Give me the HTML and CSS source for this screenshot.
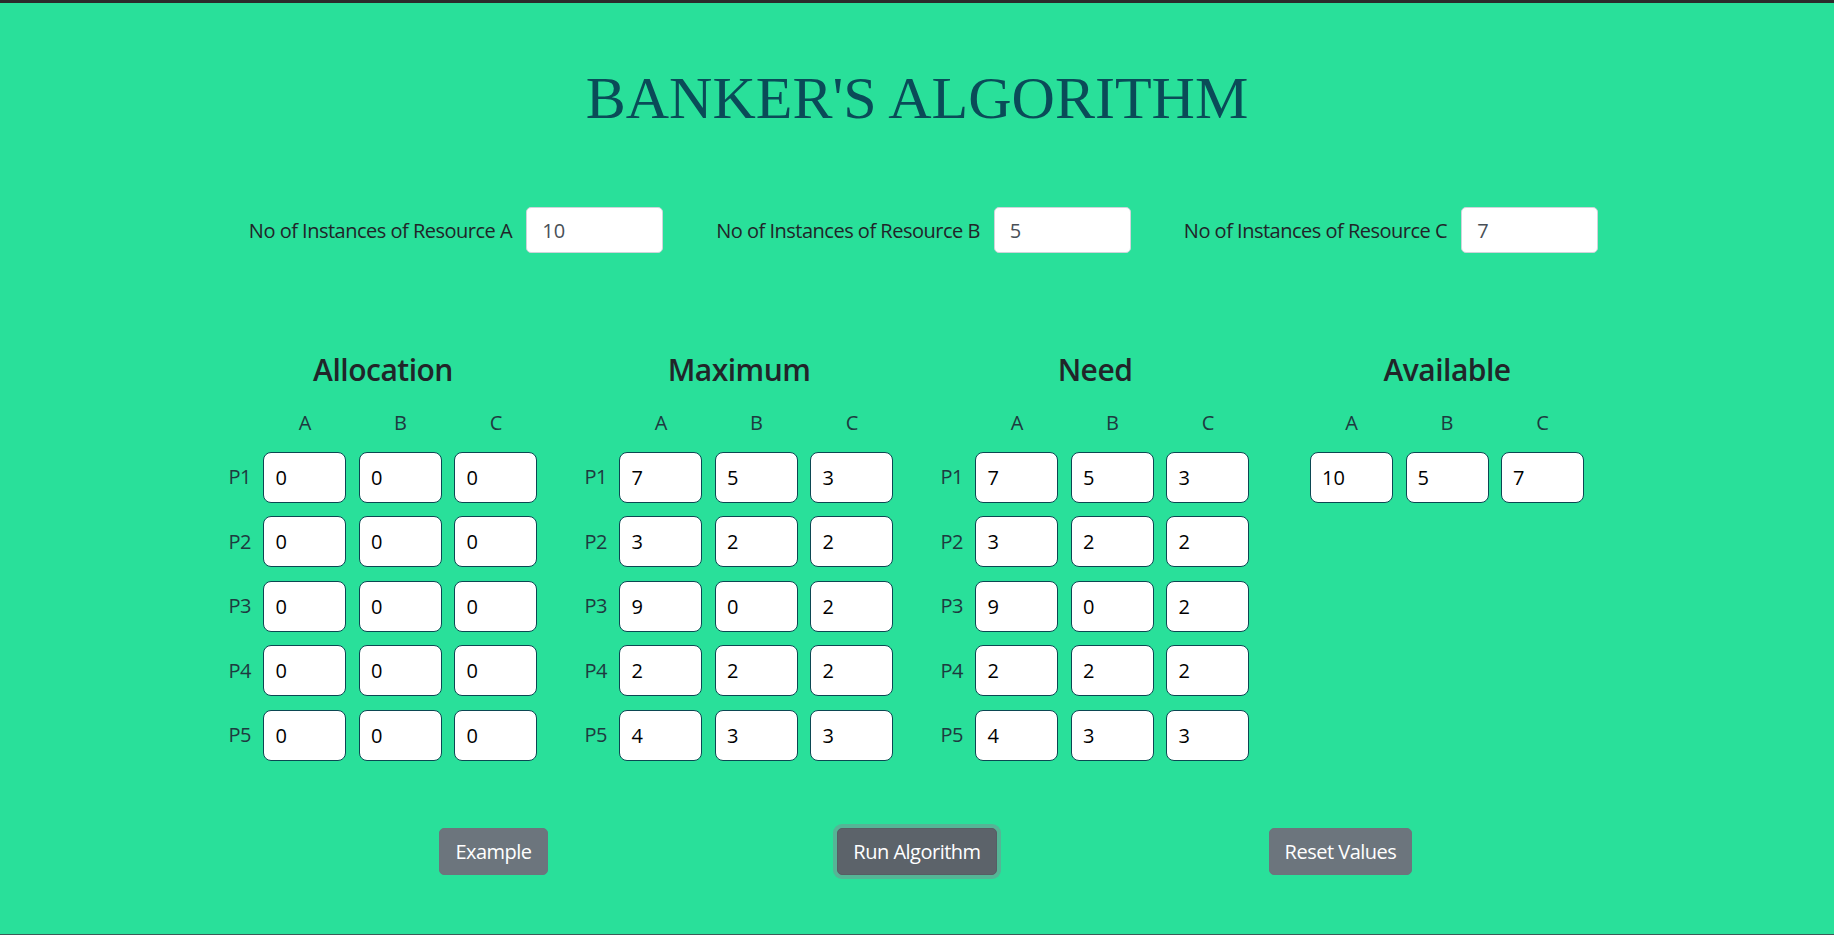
FILE: index.html
```html
<!DOCTYPE html>
<html lang="en">
<head>
<meta charset="utf-8">
<title>Banker's Algorithm</title>
<link rel="stylesheet" href="styles.css">
</head>
<body>
<div class="page">
  <h1 class="title">BANKER'S ALGORITHM</h1>

  <div class="resources">
    <div class="res">
      <label class="res-label" for="resA">No of Instances of Resource A</label>
      <input class="res-input" id="resA" type="text" value="10">
    </div>
    <div class="res">
      <label class="res-label" for="resB">No of Instances of Resource B</label>
      <input class="res-input" id="resB" type="text" value="5">
    </div>
    <div class="res">
      <label class="res-label" for="resC">No of Instances of Resource C</label>
      <input class="res-input" id="resC" type="text" value="7">
    </div>
  </div>

  <div class="matrices">
    <div class="matrix">
      <h2 class="matrix-title">Allocation</h2>
      <div class="grid">
        <span></span><span class="col-head">A</span><span class="col-head">B</span><span class="col-head">C</span>
        <span class="row-head">P1</span><input class="cell" value="0"><input class="cell" value="0"><input class="cell" value="0">
        <span class="row-head">P2</span><input class="cell" value="0"><input class="cell" value="0"><input class="cell" value="0">
        <span class="row-head">P3</span><input class="cell" value="0"><input class="cell" value="0"><input class="cell" value="0">
        <span class="row-head">P4</span><input class="cell" value="0"><input class="cell" value="0"><input class="cell" value="0">
        <span class="row-head">P5</span><input class="cell" value="0"><input class="cell" value="0"><input class="cell" value="0">
      </div>
    </div>

    <div class="matrix">
      <h2 class="matrix-title">Maximum</h2>
      <div class="grid">
        <span></span><span class="col-head">A</span><span class="col-head">B</span><span class="col-head">C</span>
        <span class="row-head">P1</span><input class="cell" value="7"><input class="cell" value="5"><input class="cell" value="3">
        <span class="row-head">P2</span><input class="cell" value="3"><input class="cell" value="2"><input class="cell" value="2">
        <span class="row-head">P3</span><input class="cell" value="9"><input class="cell" value="0"><input class="cell" value="2">
        <span class="row-head">P4</span><input class="cell" value="2"><input class="cell" value="2"><input class="cell" value="2">
        <span class="row-head">P5</span><input class="cell" value="4"><input class="cell" value="3"><input class="cell" value="3">
      </div>
    </div>

    <div class="matrix">
      <h2 class="matrix-title">Need</h2>
      <div class="grid">
        <span></span><span class="col-head">A</span><span class="col-head">B</span><span class="col-head">C</span>
        <span class="row-head">P1</span><input class="cell" value="7"><input class="cell" value="5"><input class="cell" value="3">
        <span class="row-head">P2</span><input class="cell" value="3"><input class="cell" value="2"><input class="cell" value="2">
        <span class="row-head">P3</span><input class="cell" value="9"><input class="cell" value="0"><input class="cell" value="2">
        <span class="row-head">P4</span><input class="cell" value="2"><input class="cell" value="2"><input class="cell" value="2">
        <span class="row-head">P5</span><input class="cell" value="4"><input class="cell" value="3"><input class="cell" value="3">
      </div>
    </div>

    <div class="matrix matrix-avail">
      <h2 class="matrix-title">Available</h2>
      <div class="grid grid-avail">
        <span class="col-head">A</span><span class="col-head">B</span><span class="col-head">C</span>
        <input class="cell" value="10"><input class="cell" value="5"><input class="cell" value="7">
      </div>
    </div>
  </div>

  <div class="actions">
    <div class="action"><button class="btn" type="button">Example</button></div>
    <div class="action"><button class="btn btn-active" type="button">Run Algorithm</button></div>
    <div class="action"><button class="btn" type="button">Reset Values</button></div>
  </div>
</div>
</body>
</html>
```

FILE: styles.css
```css
html, body {
  margin: 0;
  padding: 0;
}

body {
  background: #29e09a;
  font-family: "Open Sans", "Noto Sans", sans-serif;
  font-size: 20px;
  color: #212529;
}

.page {
  box-sizing: border-box;
  min-height: 100vh;
  border-top: 3px solid #2b2b2b;
  border-bottom: 1px solid #3c5b57;
  overflow: hidden;
}

.title {
  margin: 59px 0 0;
  font-family: "Liberation Serif", "Times New Roman", serif;
  font-weight: 400;
  font-size: 60px;
  line-height: 72px;
  text-align: center;
  color: #0a4b58;
}

/* resource inputs */
.resources {
  display: flex;
  justify-content: center;
  gap: 53px;
  margin-top: 73px;
  padding-left: 13px;
}

.res {
  display: flex;
  align-items: center;
  gap: 14px;
}

.res-label {
  font-size: 20px;
  letter-spacing: -0.5px;
  color: #212529;
}

.res-input {
  box-sizing: border-box;
  width: 137px;
  height: 46px;
  padding: 0 15px;
  border: 1px solid #ced4da;
  border-radius: 5px;
  background: #fff;
  font-family: inherit;
  font-size: 20px;
  color: #495057;
  outline: none;
}

/* matrices */
.matrices {
  display: grid;
  grid-template-columns: repeat(4, 356px);
  justify-content: center;
  margin-top: 99px;
}

.matrix {
  display: flex;
  flex-direction: column;
  align-items: center;
}

.matrix-avail {
  padding-right: 8px;
}

.matrix-title {
  margin: 0 0 20px;
  font-size: 30px;
  font-weight: 600;
  line-height: 36px;
  letter-spacing: -0.5px;
  color: #212529;
}

.grid {
  display: grid;
  grid-template-columns: auto repeat(3, 83px);
  grid-template-rows: 30px repeat(5, 51px);
  column-gap: 12.5px;
  row-gap: 13.5px;
  align-items: center;
}

.grid-avail {
  grid-template-columns: repeat(3, 83px);
  grid-template-rows: 30px 51px;
}

.col-head {
  text-align: center;
  line-height: 30px;
  color: #1e3a40;
}

.row-head {
  line-height: 30px;
  letter-spacing: -0.5px;
  color: #1e3a40;
}

.cell {
  box-sizing: border-box;
  width: 83px;
  height: 51px;
  padding: 0 11px;
  border: 1px solid #0b4752;
  border-radius: 8px;
  background: #fff;
  font-family: inherit;
  font-size: 20px;
  color: #000;
  outline: none;
}

/* buttons */
.actions {
  display: grid;
  grid-template-columns: repeat(3, 423.5px);
  justify-content: center;
  margin-top: 67.5px;
}

.action {
  display: flex;
  justify-content: center;
}

.btn {
  height: 47px;
  padding: 0 15px;
  border: 1px solid #6c757d;
  border-radius: 5px;
  background: #6c757d;
  color: #fff;
  font-family: inherit;
  font-size: 20px;
  letter-spacing: -0.5px;
  cursor: pointer;
}

.btn-active {
  background: #5c636a;
  border-color: #565e64;
  box-shadow: 0 0 0 4px rgba(130, 138, 145, 0.5);
}
```
